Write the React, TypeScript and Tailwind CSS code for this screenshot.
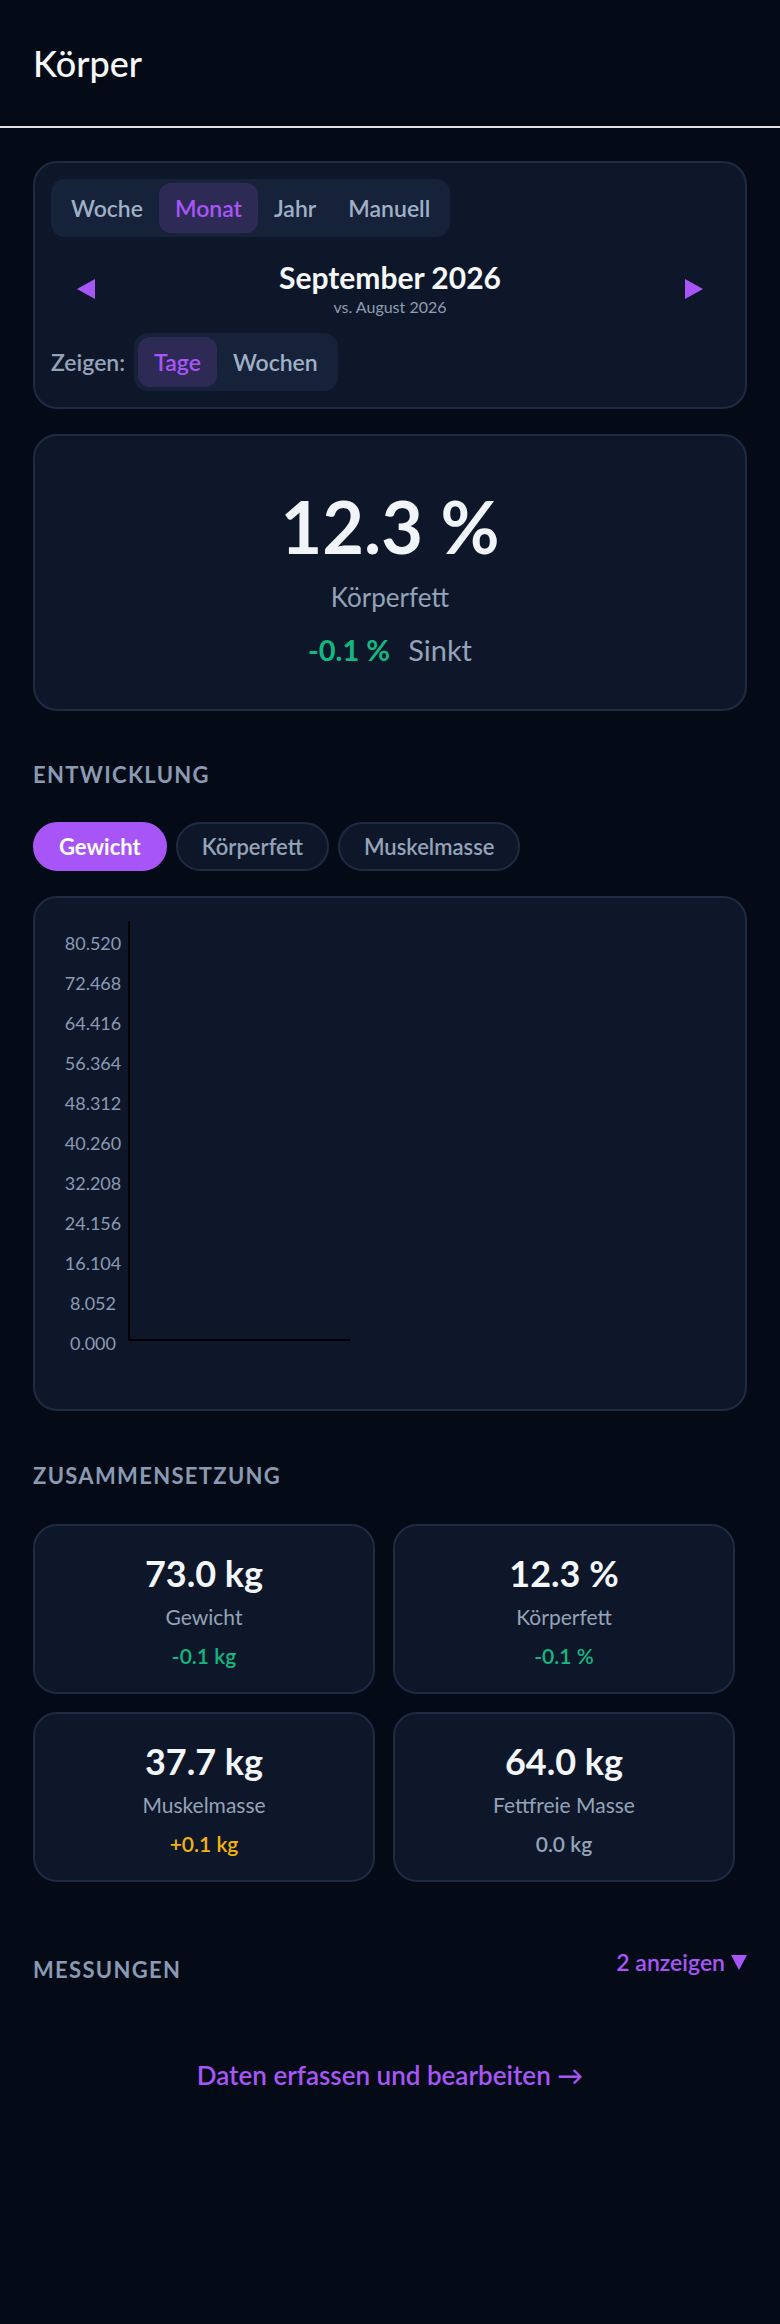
import React from "react";

const ticks = ["80.520", "72.468", "64.416", "56.364", "48.312", "40.260", "32.208", "24.156", "16.104", "8.052", "0.000"];

function Segmented({ items, active }: { items: string[]; active: string }) {
  return (
    <div className="flex rounded-[14px] bg-[#16213a] p-[4px]">
      {items.map((label) => (
        <button
          key={label}
          type="button"
          className={`rounded-[12px] px-[16px] py-[13px] text-[23px] leading-[24px] font-semibold ${
            label === active ? "bg-[#2d2a56] text-[#a855f7]" : "text-[#9fb0c6]"
          }`}
        >
          {label}
        </button>
      ))}
    </div>
  );
}

function StatCard({ value, label, delta, deltaClass }: { value: string; label: string; delta: string; deltaClass: string }) {
  return (
    <div className="flex h-[170px] flex-col items-center rounded-[24px] border-2 border-[#1e2b42] bg-[#0e1729] pt-[29px]">
      <p className="text-[36px] leading-none font-bold text-[#f3f6fa]">{value}</p>
      <p className="mt-[15px] text-[21px] leading-none text-[#94a3b8]">{label}</p>
      <p className={`mt-[18px] text-[21px] leading-none font-semibold ${deltaClass}`}>{delta}</p>
    </div>
  );
}

export default function App() {
  return (
    <div className="min-h-screen bg-[#050b16] font-['Lato',sans-serif] text-white">
      <header className="flex h-[128px] items-center border-b-2 border-[#e2e2e2] px-[33px]">
        <h1 className="text-[36px] leading-none font-medium text-[#f5f7fb]">Körper</h1>
      </header>

      <main className="flex flex-col px-[33px] pt-[33px] pb-[40px]">
        {/* period selector */}
        <section className="rounded-[24px] border-2 border-[#1e2b42] bg-[#0e1729] p-[16px]">
          <div className="flex">
            <Segmented items={["Woche", "Monat", "Jahr", "Manuell"]} active="Monat" />
          </div>
          <div className="mt-[25px] flex items-center justify-between px-[26px]">
            <button type="button" aria-label="zurück">
              <svg width="18" height="20" viewBox="0 0 18 20" className="block">
                <polygon points="18,0 18,20 0,10" fill="#a855f7" />
              </svg>
            </button>
            <div className="flex flex-col items-center">
              <p className="text-[30px] leading-none font-bold text-[#f5f7fb]">September 2026</p>
              <p className="mt-[7px] text-[16px] leading-none text-[#8f9db3]">vs. August 2026</p>
            </div>
            <button type="button" aria-label="weiter">
              <svg width="18" height="20" viewBox="0 0 18 20" className="block">
                <polygon points="0,0 18,10 0,20" fill="#a855f7" />
              </svg>
            </button>
          </div>
          <div className="mt-[18px] flex items-center gap-[9px]">
            <span className="text-[23px] leading-none font-semibold text-[#94a3b8]">Zeigen:</span>
            <Segmented items={["Tage", "Wochen"]} active="Tage" />
          </div>
        </section>

        {/* headline stat */}
        <section className="mt-[25px] flex h-[277px] flex-col items-center rounded-[24px] border-2 border-[#1e2b42] bg-[#0e1729] pt-[54px]">
          <p className="text-[72px] leading-none font-bold text-[#f1f4f9]">12.3 %</p>
          <p className="mt-[22px] text-[26px] leading-none text-[#94a3b8]">Körperfett</p>
          <p className="mt-[25px] flex items-baseline gap-[18px] text-[29px] leading-none">
            <span className="font-bold text-[#10b981]">-0.1 %</span>
            <span className="text-[#94a3b8]">Sinkt</span>
          </p>
        </section>

        <h2 className="mt-[53px] text-[22px] leading-none font-bold tracking-[0.06em] text-[#8a9ab3]">ENTWICKLUNG</h2>

        <div className="mt-[36px] flex gap-[9px]">
          <button type="button" className="rounded-full border-2 border-[#a855f7] bg-[#a855f7] px-[24px] py-[11px] text-[22px] leading-[23px] font-bold text-white">
            Gewicht
          </button>
          <button type="button" className="rounded-full border-2 border-[#1e2b42] bg-[#0e1729] px-[24px] py-[11px] text-[22px] leading-[23px] font-semibold text-[#94a3b8]">
            Körperfett
          </button>
          <button type="button" className="rounded-full border-2 border-[#1e2b42] bg-[#0e1729] px-[24px] py-[11px] text-[22px] leading-[23px] font-semibold text-[#94a3b8]">
            Muskelmasse
          </button>
        </div>

        {/* chart */}
        <section className="mt-[25px] rounded-[24px] border-2 border-[#1e2b42] bg-[#0e1729]">
          <svg width="710" height="511" className="block">
            {ticks.map((t, i) => (
              <text
                key={t}
                x={58}
                y={45 + i * 40}
                textAnchor="middle"
                dominantBaseline="central"
                fontSize="18"
                fill="#8b9ab4"
              >
                {t}
              </text>
            ))}
            <line x1="94" y1="23" x2="94" y2="443" stroke="#000" strokeWidth="2" />
            <line x1="93" y1="442" x2="315" y2="442" stroke="#000" strokeWidth="2" />
          </svg>
        </section>

        <h2 className="mt-[54px] text-[22px] leading-none font-bold tracking-[0.06em] text-[#8a9ab3]">ZUSAMMENSETZUNG</h2>

        <div className="mt-[37px] grid w-[702px] grid-cols-2 gap-[18px]">
          <StatCard value="73.0 kg" label="Gewicht" delta="-0.1 kg" deltaClass="text-[#10b981]" />
          <StatCard value="12.3 %" label="Körperfett" delta="-0.1 %" deltaClass="text-[#10b981]" />
          <StatCard value="37.7 kg" label="Muskelmasse" delta="+0.1 kg" deltaClass="text-[#f2b40c]" />
          <StatCard value="64.0 kg" label="Fettfreie Masse" delta="0.0 kg" deltaClass="text-[#94a3b8]" />
        </div>

        <div className="mt-[69px] flex items-start justify-between">
          <h2 className="pt-[8px] text-[22px] leading-none font-bold tracking-[0.06em] text-[#8a9ab3]">MESSUNGEN</h2>
          <button type="button" className="flex items-center gap-[6px] text-[23px] leading-none font-semibold text-[#a855f7]">
            2 anzeigen
            <svg width="16" height="15" viewBox="0 0 16 15" className="block">
              <polygon points="0,0 16,0 8,15" fill="#a855f7" />
            </svg>
          </button>
        </div>

        <a href="#" className="mt-[81px] self-center text-[26px] leading-none font-semibold text-[#a855f7]">
          Daten erfassen und bearbeiten →
        </a>
      </main>
    </div>
  );
}
